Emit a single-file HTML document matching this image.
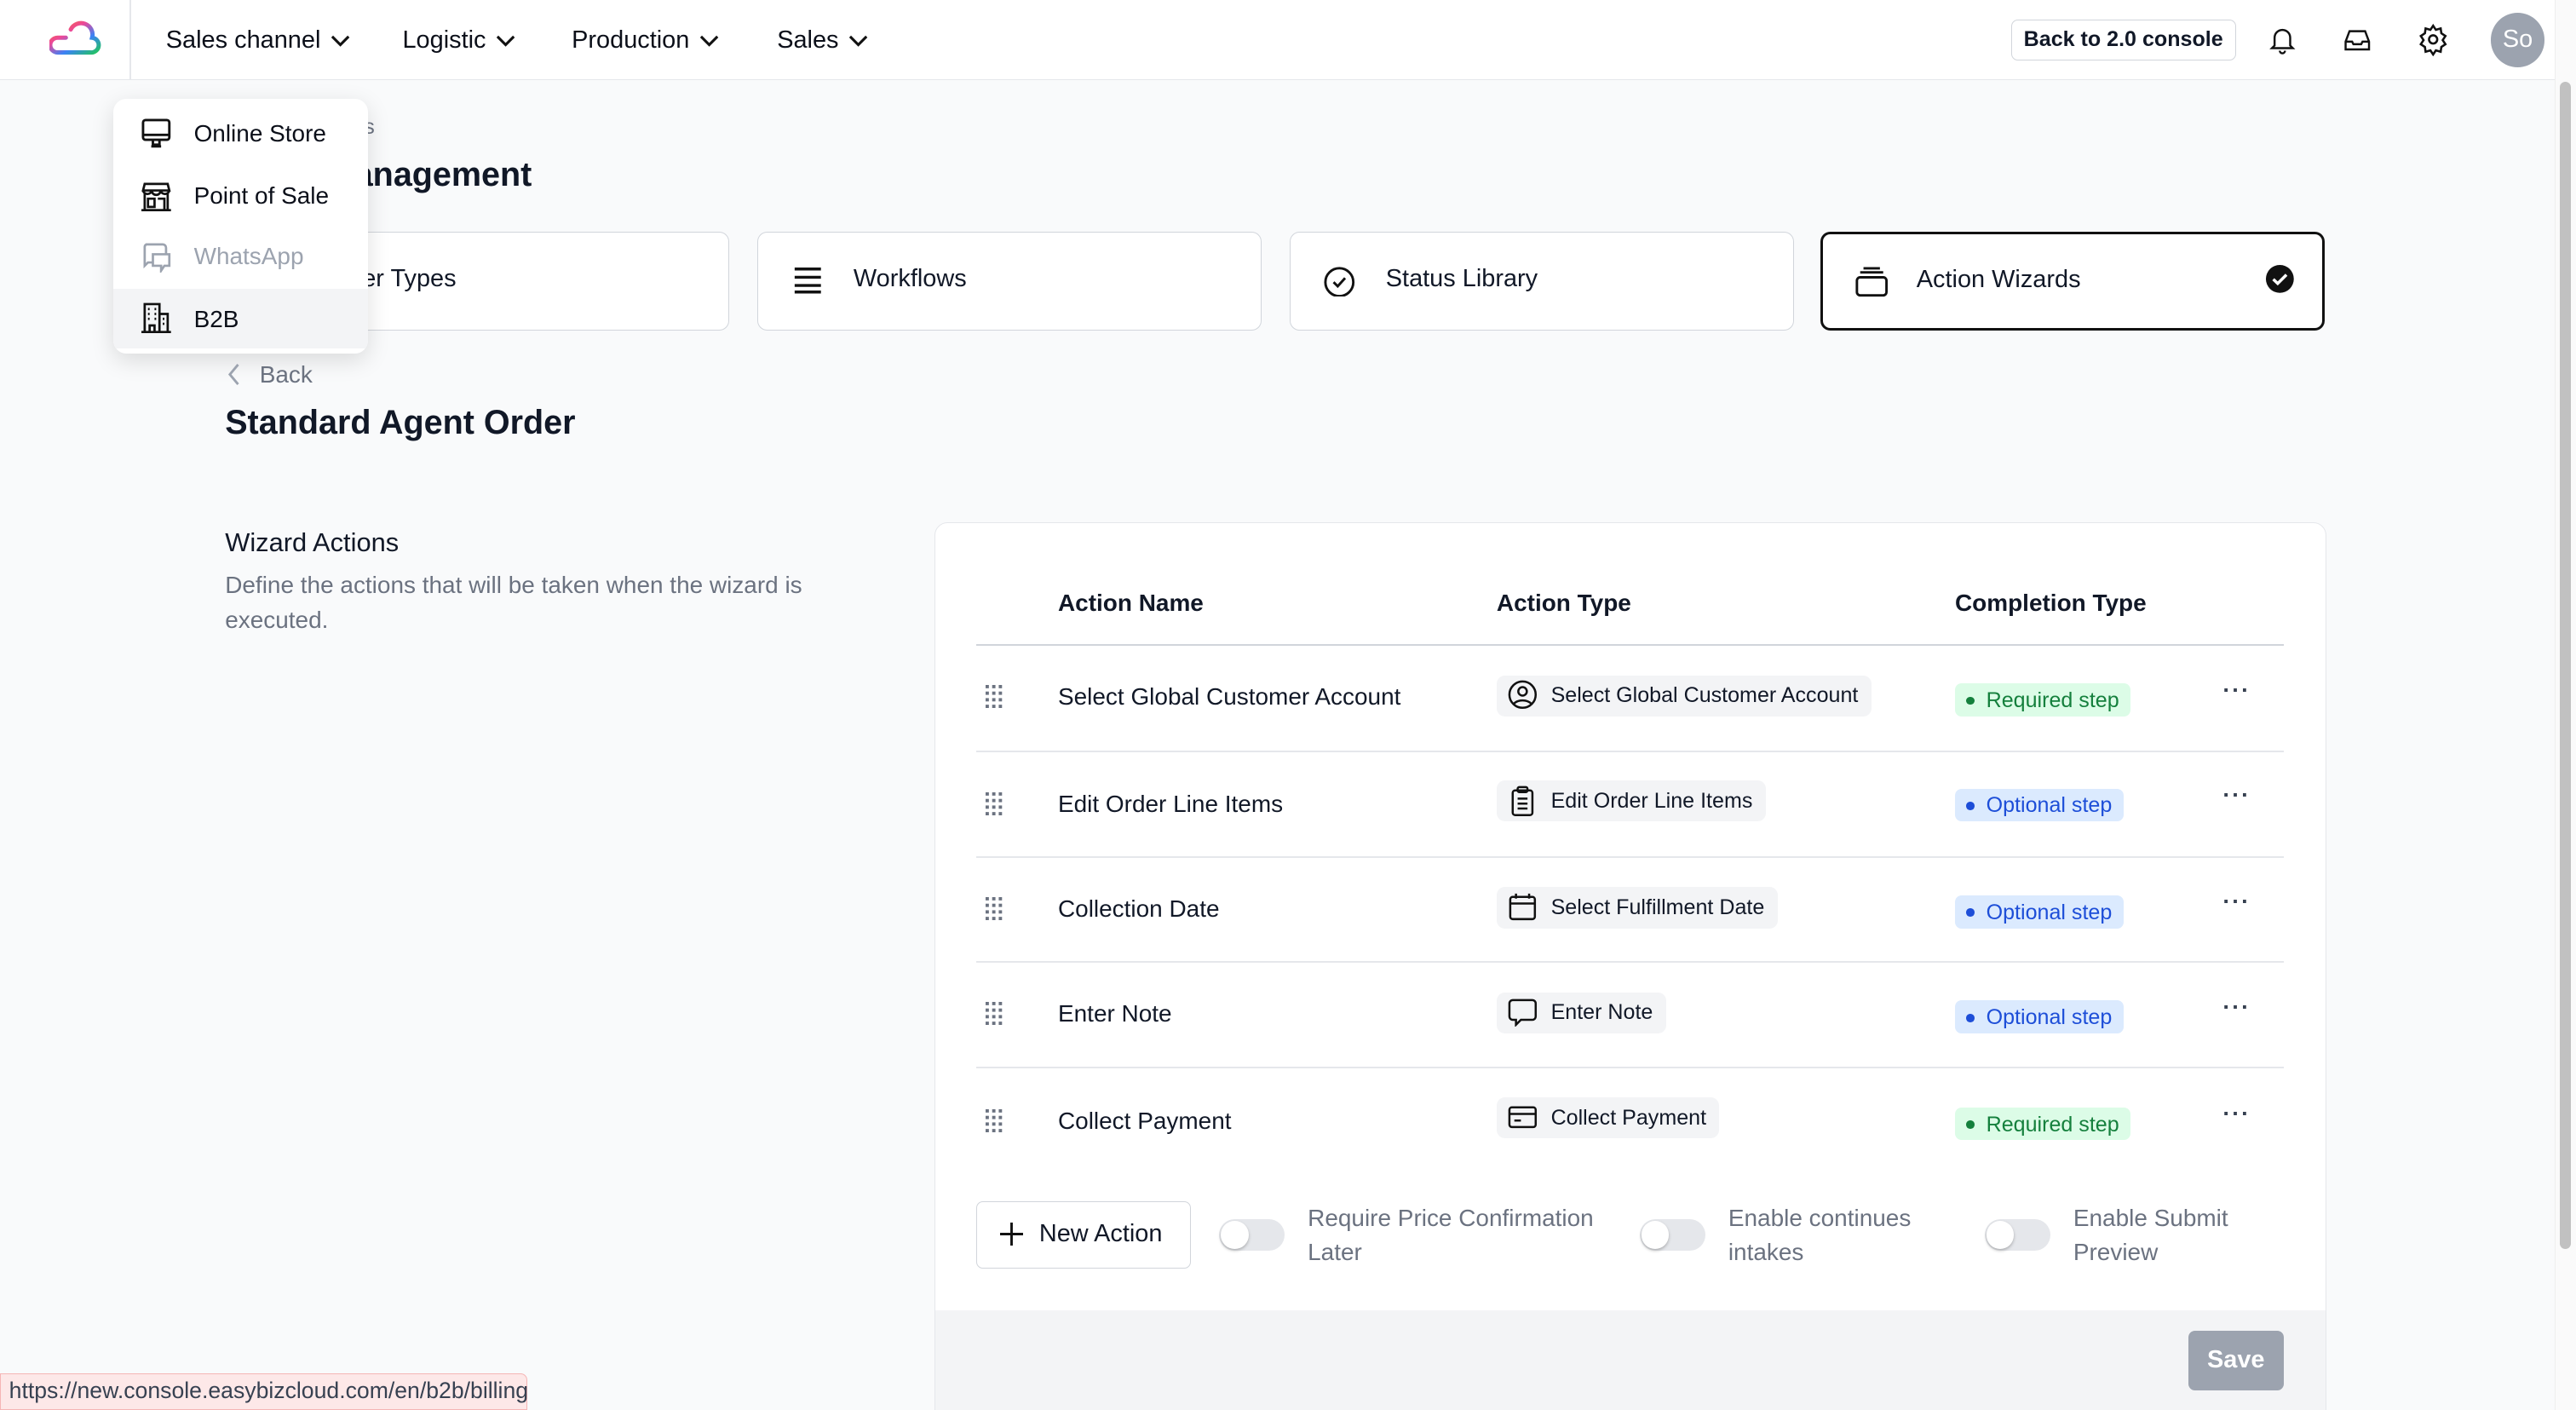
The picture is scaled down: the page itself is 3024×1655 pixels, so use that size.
<!DOCTYPE html>
<html><head><meta charset="utf-8">
<style>
*{box-sizing:border-box;margin:0;padding:0}
html,body{width:3024px;height:1654px;overflow:hidden;background:#f9fafb}
#root{position:absolute;left:0;top:0;width:1568px;height:858px;zoom:1.92857;font-family:"Liberation Sans",sans-serif;color:#111827;background:#f9fafb;overflow:hidden}
.a{position:absolute;white-space:nowrap}
.nav{position:absolute;left:0;top:0;width:1555px;height:49px;background:#fff;border-bottom:1px solid #e5e7eb}
.ni{font-size:15px;top:16px;color:#0b0f19}
.ni svg{vertical-align:middle;margin-left:6px}
.card{position:absolute;top:141px;height:60px;width:307px;background:#fff;border:1px solid #d1d5db;border-radius:6px;font-size:15px}
.card span{position:absolute;left:58px;top:20px}
.card svg{position:absolute;left:20px;top:19px}
.panel{position:absolute;left:569px;top:318px;width:847px;height:560px;background:#fff;border:1px solid #e5e7eb;border-radius:8px;overflow:hidden}
.th{font-size:14.5px;font-weight:bold;top:359px}
.row{position:absolute;left:594px;width:796px;height:1px;background:#e5e7eb}
.nm{font-size:14.5px;left:644px}
.chip{position:absolute;left:911px;height:25px;background:#f3f4f6;border-radius:5px;font-size:13px;padding:5px 8px 0 33px;white-space:nowrap}
.chip svg{position:absolute;left:7px;top:3px}
.bd{position:absolute;left:1190px;height:20px;border-radius:4px;font-size:13px;padding:3px 7px 0 19px;white-space:nowrap}
.bd:before{content:"";position:absolute;left:7px;top:8px;width:5px;height:5px;border-radius:50%;background:currentColor}
.req{background:#dcfce7;color:#15803d}
.opt{background:#dbeafe;color:#1d4ed8}
.dots{left:1353px;font-size:14px;font-weight:bold;letter-spacing:1px;color:#374151}
.tg{position:absolute;top:742px;width:40px;height:19px;border-radius:10px;background:#e5e7eb}
.tg:after{content:"";position:absolute;left:1px;top:1px;width:17px;height:17px;border-radius:50%;background:#fff;box-shadow:0 1px 2px rgba(0,0,0,.25)}
.tt{font-size:14.5px;color:#6b7280;line-height:21px;top:731px;white-space:normal}
.dd{font-size:14.5px;left:118px;color:#0b0f19}
</style></head><body><div id="root">
<div class="nav">
  <svg class="a" style="left:30px;top:12px" width="32" height="24" viewBox="0 0 32 24"><defs><linearGradient id="g" x1="0" y1="0" x2="1" y2="1"><stop offset="0" stop-color="#f97316"/><stop offset=".35" stop-color="#ec4899"/><stop offset=".65" stop-color="#3b82f6"/><stop offset="1" stop-color="#22c55e"/></linearGradient></defs><path d="M10 11 H5 a3.5 3.5 0 0 0 0 9 H25 a4.5 4.5 0 0 0 1-9 a7 7 0 0 0-13-5" fill="none" stroke="url(#g)" stroke-width="2.6" stroke-linecap="round"/></svg>
  <div class="a" style="left:79px;top:0;width:1px;height:49px;background:#e5e7eb"></div>
  <div class="a ni" style="left:101px">Sales channel<svg width="12" height="8" viewBox="0 0 12 8"><path d="M1 1.5l5 5 5-5" fill="none" stroke="#111" stroke-width="1.6"/></svg></div>
  <div class="a ni" style="left:245px">Logistic<svg width="12" height="8" viewBox="0 0 12 8"><path d="M1 1.5l5 5 5-5" fill="none" stroke="#111" stroke-width="1.6"/></svg></div>
  <div class="a ni" style="left:348px">Production<svg width="12" height="8" viewBox="0 0 12 8"><path d="M1 1.5l5 5 5-5" fill="none" stroke="#111" stroke-width="1.6"/></svg></div>
  <div class="a ni" style="left:473px">Sales<svg width="12" height="8" viewBox="0 0 12 8"><path d="M1 1.5l5 5 5-5" fill="none" stroke="#111" stroke-width="1.6"/></svg></div>
  <div class="a" style="left:1224px;top:12px;width:137px;height:25px;border:1px solid #d1d5db;border-radius:4px;font-size:13px;font-weight:bold;text-align:center;line-height:23px">Back to 2.0 console</div>
  <svg class="a" style="left:1380px;top:15px" width="19" height="19" viewBox="0 0 24 24" fill="none" stroke="#111" stroke-width="1.6"><path d="M6 16V10a6 6 0 0 1 12 0v6l2 2H4z M10 20a2 2 0 0 0 4 0"/></svg>
  <svg class="a" style="left:1425px;top:15px" width="20" height="19" viewBox="0 0 24 24" fill="none" stroke="#111" stroke-width="1.6"><path d="M3 13l3-8h12l3 8v6H3z M3 13h5l1 2h6l1-2h5"/></svg>
  <svg class="a" style="left:1471px;top:14px" width="20" height="20" viewBox="0 0 24 24" fill="none" stroke="#111" stroke-width="1.6"><circle cx="12" cy="12" r="3"/><path d="M12 2l2 3 3.5-1 .5 3.5 3 2-2 3 2 3-3 2-.5 3.5-3.5-1-2 3-2-3-3.5 1-.5-3.5-3-2 2-3-2-3 3-2 .5-3.5 3.5 1z"/></svg>
  <div class="a" style="left:1516px;top:8px;width:33px;height:33px;border-radius:50%;background:#9ca3af;color:#fff;font-size:15px;text-align:center;line-height:33px">So</div>
</div>
<div class="a" style="left:1555px;top:0;width:13px;height:858px;background:#fafafa;border-left:1px solid #eee"></div>
<div class="a" style="left:1558px;top:50px;width:7px;height:710px;background:#c1c1c1;border-radius:4px"></div>

<div class="a" style="left:137px;top:70px;font-size:13px;color:#6b7280">Sales Channels</div>
<div class="a" style="left:137px;top:95px;font-size:20.5px;font-weight:bold">Order Management</div>

<div class="card" style="left:137px"><svg width="20" height="20"></svg><span>Order Types</span></div>
<div class="card" style="left:461px"><svg width="20" height="20" viewBox="0 0 20 20" stroke="#111" stroke-width="1.8"><path d="M2 3h16M2 8h16M2 13h16M2 17h16"/></svg><span>Workflows</span></div>
<div class="card" style="left:785px"><svg width="20" height="20" viewBox="0 0 20 20" fill="none" stroke="#111" stroke-width="1.5"><circle cx="10" cy="11" r="8.5"/><path d="M6.5 11l2.5 2.5 4.5-5"/></svg><span>Status Library</span></div>
<div class="card" style="left:1108px;border:2px solid #111"><svg width="22" height="20" viewBox="0 0 22 20" fill="none" stroke="#111" stroke-width="1.5" style="left:19px"><rect x="2" y="7" width="18" height="11" rx="2"/><path d="M4 4h14M6 1.5h10"/></svg><span style="left:57px;top:19px">Action Wizards</span><svg width="18" height="18" viewBox="0 0 18 18" style="left:269px;top:18px"><circle cx="9" cy="9" r="8.5" fill="#111"/><path d="M5 9.2l2.7 2.6L13 6.5" fill="none" stroke="#fff" stroke-width="1.8"/></svg></div>

<div class="a" style="left:69px;top:60px;width:155px;height:155px;background:#fff;border-radius:8px;box-shadow:0 4px 14px rgba(0,0,0,.13);overflow:hidden">
  <div class="a" style="left:0;top:116px;width:155px;height:36px;background:#f3f4f6"></div>
</div>
<svg class="a" style="left:86px;top:72px" width="18" height="19" viewBox="0 0 18 19" fill="none" stroke="#111" stroke-width="1.5"><rect x="1" y="1" width="16" height="12" rx="1.5"/><path d="M1 10h16M7 13v3h4v-3M6 17h6"/></svg>
<div class="a dd" style="top:73px">Online Store</div>
<svg class="a" style="left:86px;top:110px" width="18" height="19" viewBox="0 0 18 19" fill="none" stroke="#111" stroke-width="1.4"><path d="M2 2h14l1 4H1z M1 6a2.7 2.7 0 0 0 5.3 0a2.7 2.7 0 0 0 5.4 0a2.7 2.7 0 0 0 5.3 0 M2 8v10h14V8 M4 11h4v5H4z M10 11h4v7"/><path d="M0 18h18"/></svg>
<div class="a dd" style="top:111px">Point of Sale</div>
<svg class="a" style="left:86px;top:147px" width="18" height="19" viewBox="0 0 18 19" fill="none" stroke="#9ca3af" stroke-width="1.4"><path d="M3 2h10a2 2 0 0 1 2 2v4H7v5H4l-2 2V4a2 2 0 0 1 1-2z M7 8h10v7h-3l-2 3v-3H7z"/></svg>
<div class="a dd" style="top:148px;color:#9ca3af">WhatsApp</div>
<svg class="a" style="left:86px;top:184px" width="18" height="19" viewBox="0 0 18 19" fill="none" stroke="#111" stroke-width="1.4"><path d="M2 18V1h9v17M11 7h5v11M0 18h18 M4 4h1M8 4h1M4 7h1M8 7h1M4 10h1M8 10h1M5 18v-4h3v4M13 10h1M13 13h1"/></svg>
<div class="a dd" style="top:186px">B2B</div>

<svg class="a" style="left:138px;top:221px" width="9" height="14" viewBox="0 0 9 14"><path d="M7 1L2 7l5 6" fill="none" stroke="#9ca3af" stroke-width="1.5"/></svg>
<div class="a" style="left:158px;top:220px;font-size:14.5px;color:#6b7280">Back</div>
<div class="a" style="left:137px;top:246px;font-size:20.5px;font-weight:bold">Standard Agent Order</div>

<div class="a" style="left:137px;top:321px;font-size:16px">Wizard Actions</div>
<div class="a" style="left:137px;top:346px;width:400px;font-size:14.5px;line-height:21px;color:#6b7280;white-space:normal">Define the actions that will be taken when the wizard is executed.</div>

<div class="panel"><div class="a" style="left:0;top:479px;width:847px;height:90px;background:#f3f4f6"></div></div>
<div class="a th" style="left:644px">Action Name</div>
<div class="a th" style="left:911px">Action Type</div>
<div class="a th" style="left:1190px">Completion Type</div>
<div class="row" style="top:392px;background:#d1d5db"></div>
<div class="row" style="top:457px"></div>
<div class="row" style="top:521px"></div>
<div class="row" style="top:585px"></div>
<div class="row" style="top:649px"></div>

<svg width="0" height="0" style="position:absolute"><defs><g id="dr" fill="#6b7280"><rect x="0" y="0" width="2" height="2"/><rect x="4" y="0" width="2" height="2"/><rect x="8" y="0" width="2" height="2"/><rect x="0" y="4" width="2" height="2"/><rect x="4" y="4" width="2" height="2"/><rect x="8" y="4" width="2" height="2"/><rect x="0" y="8" width="2" height="2"/><rect x="4" y="8" width="2" height="2"/><rect x="8" y="8" width="2" height="2"/><rect x="0" y="12" width="2" height="2"/><rect x="4" y="12" width="2" height="2"/><rect x="8" y="12" width="2" height="2"/></g></defs></svg>

<svg class="a" style="left:600px;top:417px" width="12" height="15"><use href="#dr"/></svg>
<div class="a nm" style="top:416px">Select Global Customer Account</div>
<div class="chip" style="top:411px"><svg width="18" height="18" viewBox="0 0 18 18" fill="none" stroke="#111" stroke-width="1.3"><circle cx="9" cy="9" r="8"/><circle cx="9" cy="7" r="2.6"/><path d="M3.8 14.5a6 4 0 0 1 10.4 0"/></svg>Select Global Customer Account</div>
<div class="bd req" style="top:416px">Required step</div>
<div class="a dots" style="top:412px">···</div>

<svg class="a" style="left:600px;top:482px" width="12" height="15"><use href="#dr"/></svg>
<div class="a nm" style="top:481px">Edit Order Line Items</div>
<div class="chip" style="top:475px"><svg width="18" height="19" viewBox="0 0 18 19" fill="none" stroke="#111" stroke-width="1.3"><rect x="3" y="3" width="12" height="15" rx="1.5"/><rect x="6" y="1" width="6" height="3" rx="1"/><path d="M6 8h6M6 11h6M6 14h6"/></svg>Edit Order Line Items</div>
<div class="bd opt" style="top:480px">Optional step</div>
<div class="a dots" style="top:476px">···</div>

<svg class="a" style="left:600px;top:546px" width="12" height="15"><use href="#dr"/></svg>
<div class="a nm" style="top:545px">Collection Date</div>
<div class="chip" style="top:540px"><svg width="18" height="18" viewBox="0 0 18 18" fill="none" stroke="#111" stroke-width="1.3"><rect x="1.5" y="3" width="15" height="13.5" rx="1.5"/><path d="M1.5 7h15M5 1v3M13 1v3"/></svg>Select Fulfillment Date</div>
<div class="bd opt" style="top:545px">Optional step</div>
<div class="a dots" style="top:541px">···</div>

<svg class="a" style="left:600px;top:610px" width="12" height="15"><use href="#dr"/></svg>
<div class="a nm" style="top:609px">Enter Note</div>
<div class="chip" style="top:604px"><svg width="18" height="18" viewBox="0 0 18 18" fill="none" stroke="#111" stroke-width="1.3"><path d="M3 1.5h12a2 2 0 0 1 2 2v8a2 2 0 0 1-2 2H8l-3 3v-3H3a2 2 0 0 1-2-2v-8a2 2 0 0 1 2-2z"/></svg>Enter Note</div>
<div class="bd opt" style="top:609px">Optional step</div>
<div class="a dots" style="top:605px">···</div>

<svg class="a" style="left:600px;top:675px" width="12" height="15"><use href="#dr"/></svg>
<div class="a nm" style="top:674px">Collect Payment</div>
<div class="chip" style="top:668px"><svg width="18" height="18" viewBox="0 0 18 18" fill="none" stroke="#111" stroke-width="1.3"><rect x="1" y="3" width="16" height="12" rx="1.5"/><path d="M1 7h16M4 11h4"/></svg>Collect Payment</div>
<div class="bd req" style="top:674px">Required step</div>
<div class="a dots" style="top:670px">···</div>

<div class="a" style="left:594px;top:731px;width:131px;height:41px;background:#fff;border:1px solid #d1d5db;border-radius:4px;font-size:15px;line-height:39px;padding-left:38px">New Action</div>
<svg class="a" style="left:609px;top:744px" width="14" height="14" viewBox="0 0 14 14" stroke="#111" stroke-width="1.5"><path d="M7 0v14M0 7h14"/></svg>
<div class="tg" style="left:742px"></div>
<div class="a tt" style="left:796px;width:190px">Require Price Confirmation Later</div>
<div class="tg" style="left:998px"></div>
<div class="a tt" style="left:1052px;width:140px">Enable continues intakes</div>
<div class="tg" style="left:1208px"></div>
<div class="a tt" style="left:1262px;width:120px">Enable Submit Preview</div>

<div class="a" style="left:1332px;top:810px;width:58px;height:36px;background:#9ca3af;border-radius:4px;color:#fff;font-size:15px;font-weight:bold;text-align:center;line-height:36px">Save</div>

<div class="a" style="left:0;top:836px;width:321px;height:22px;background:#fde8e8;border:1px solid #f5b5b5;border-radius:0 4px 0 0;font-size:13.8px;color:#374151;line-height:20px;padding-left:5px">https://new.console.easybizcloud.com/en/b2b/billing</div>
</div></body></html>
